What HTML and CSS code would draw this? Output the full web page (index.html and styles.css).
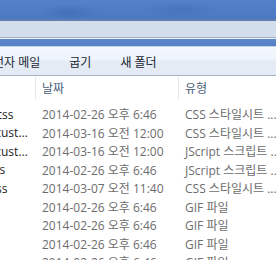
FILE: index.html
```html
<!DOCTYPE html>
<html>
<head>
  <link rel="stylesheet" href="styles.css">
</head>
<body>
  <div class="window">
    <div class="glass">
      <div class="titlebar"></div>
      <div class="addressbar"></div>
      <div class="glass-gap"></div>
    </div>

    <div class="toolbar">
      <span class="tool first">전자 메일</span>
      <span class="tool">굽기</span>
      <span class="tool">새 폴더</span>
    </div>

    <div class="list">
      <div class="header">
        <div class="cell name"></div>
        <div class="cell date">날짜</div>
        <div class="cell type">유형</div>
      </div>
      <div class="rows">
        <div class="row">
          <div class="cell name">bootstrap-theme.css</div>
          <div class="cell date">2014-02-26 오후 6:46</div>
          <div class="cell type">CSS 스타일시트 ...</div>
        </div>
        <div class="row">
          <div class="cell name">jquery-ui-1.10.14.custom.css</div>
          <div class="cell date">2014-03-16 오전 12:00</div>
          <div class="cell type">CSS 스타일시트 ...</div>
        </div>
        <div class="row">
          <div class="cell name">jquery-ui-1.10.14.custom.js</div>
          <div class="cell date">2014-03-16 오전 12:00</div>
          <div class="cell type">JScript 스크립트 ...</div>
        </div>
        <div class="row">
          <div class="cell name">bootstrap-tooltip.js</div>
          <div class="cell date">2014-02-26 오후 6:46</div>
          <div class="cell type">JScript 스크립트 ...</div>
        </div>
        <div class="row">
          <div class="cell name">jquery-ui.theme.css</div>
          <div class="cell date">2014-03-07 오전 11:40</div>
          <div class="cell type">CSS 스타일시트 ...</div>
        </div>
        <div class="row">
          <div class="cell name">arrow-left.gif</div>
          <div class="cell date">2014-02-26 오후 6:46</div>
          <div class="cell type">GIF 파일</div>
        </div>
        <div class="row">
          <div class="cell name">arrow-up.gif</div>
          <div class="cell date">2014-02-26 오후 6:46</div>
          <div class="cell type">GIF 파일</div>
        </div>
        <div class="row">
          <div class="cell name">bullet.gif</div>
          <div class="cell date">2014-02-26 오후 6:46</div>
          <div class="cell type">GIF 파일</div>
        </div>
        <div class="row">
          <div class="cell name">close.gif</div>
          <div class="cell date">2014-02-26 오후 6:46</div>
          <div class="cell type">GIF 파일</div>
        </div>
      </div>
    </div>
  </div>
</body>
</html>
```

FILE: styles.css
```css
body {
  margin: 0;
  overflow: hidden;
  background: white;
}

.window {
  width: 276px;
  height: 260px;
  overflow: hidden;
  font-family: "Open Sans", "Noto Sans CJK KR", sans-serif;
  font-size: 12px;
  color: #1e1e1e;
}

.titlebar {
  height: 19px;
  background:
    radial-gradient(ellipse 30px 8px at 70px 12px, rgba(40, 80, 150, 0.25), transparent),
    radial-gradient(ellipse 40px 8px at 180px 10px, rgba(40, 80, 150, 0.2), transparent),
    linear-gradient(#5382c9, #4a79c2);
  border-bottom: 2px solid #5f7fb3;
}

.addressbar {
  height: 16px;
  background: #d3deed;
  border-bottom: 1px solid #9fb0c8;
}

.glass-gap {
  height: 7px;
  border-top: 1px solid #eef3fa;
  background: linear-gradient(#5b87cc, #5580c6);
}

.toolbar {
  height: 27px;
  display: flex;
  align-items: center;
  gap: 29px;
  padding-top: 1px;
  background: linear-gradient(#f3f8fe 0%, #eef4fb 45%, #e5ecf5 50%, #e3eaf4 100%);
  border-top: 1px solid #c5d3e6;
  border-bottom: 1px solid #a5b3c6;
  color: #1a2433;
}

.tool.first {
  margin-left: -7px;
}

.header {
  display: flex;
  height: 24px;
  align-items: stretch;
}

.header .cell {
  display: flex;
  align-items: center;
  border-right: 1px solid #e3e8ef;
}

.rows {
  padding-top: 5px;
}

.row {
  display: flex;
  height: 18.5px;
  align-items: center;
}

.cell {
  white-space: nowrap;
  overflow: hidden;
  box-sizing: border-box;
  flex-shrink: 0;
}

.name {
  margin-left: -108px;
  width: 144px;
  padding: 0 2px 0 6px;
  text-overflow: ellipsis;
}

.date {
  width: 143px;
  padding-left: 6px;
  color: #6d6d6d;
}

.type {
  width: 120px;
  padding-left: 6px;
  color: #6d6d6d;
}

.header .date,
.header .type {
  color: #4c607a;
}
```
